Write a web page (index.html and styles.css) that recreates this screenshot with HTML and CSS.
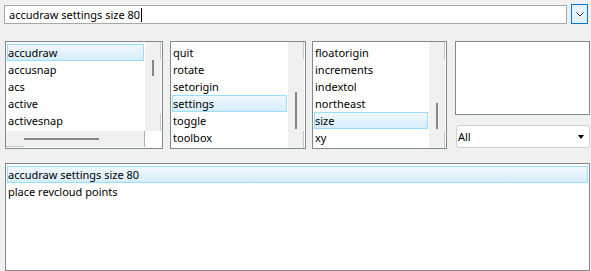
FILE: index.html
```html
<!DOCTYPE html>
<html>
<head>
<meta charset="utf-8">
<link rel="stylesheet" href="styles.css">
</head>
<body>
<div class="page">
  <div class="toprow">
    <div class="cmd"><span class="cmdtext">accudraw settings size 80</span><span class="caret"></span></div>
    <div class="dropbtn">
      <svg width="8" height="5" viewBox="0 0 8 5"><path d="M0.5 0.5 L4 4 L7.5 0.5" fill="none" stroke="#333" stroke-width="1"/></svg>
    </div>
  </div>

  <div class="midrow">
    <div class="list l1">
      <div class="items">
        <div class="item sel">accudraw</div>
        <div class="item">accusnap</div>
        <div class="item">acs</div>
        <div class="item">active</div>
        <div class="item">activesnap</div>
      </div>
      <div class="vscroll">
        <div class="sb-btn"></div>
        <div class="track"><div class="thumb" style="margin-top:1px;height:16px"></div></div>
        <div class="sb-btn"></div>
      </div>
      <div class="hscroll">
        <div class="hb-left"></div>
        <div class="htrack"><div class="hthumb" style="margin-left:0;width:75px"></div></div>
        <div class="hb-right"></div>
      </div>
      <div class="corner"></div>
    </div>

    <div class="list l2">
      <div class="items">
        <div class="item">quit</div>
        <div class="item">rotate</div>
        <div class="item">setorigin</div>
        <div class="item sel">settings</div>
        <div class="item">toggle</div>
        <div class="item">toolbox</div>
      </div>
      <div class="vscroll">
        <div class="sb-btn"></div>
        <div class="track"><div class="thumb" style="margin-top:33px;height:37px"></div></div>
        <div class="sb-btn"></div>
      </div>
    </div>

    <div class="list l3">
      <div class="items">
        <div class="item">floatorigin</div>
        <div class="item">increments</div>
        <div class="item">indextol</div>
        <div class="item">northeast</div>
        <div class="item sel">size</div>
        <div class="item">xy</div>
      </div>
      <div class="vscroll">
        <div class="sb-btn"></div>
        <div class="track"><div class="thumb" style="margin-top:44px;height:26px"></div></div>
        <div class="sb-btn"></div>
      </div>
    </div>

    <div class="side">
      <div class="preview"></div>
      <div class="combo"><span>All</span><span class="tri"></span></div>
    </div>
  </div>

  <div class="biglist">
    <div class="items">
      <div class="item sel">accudraw settings size 80</div>
      <div class="item">place revcloud points</div>
    </div>
  </div>
</div>
</body>
</html>
```

FILE: styles.css
```css
* { box-sizing: border-box; }
html, body { margin: 0; padding: 0; }
body {
  background: #f0f0f0;
  font-family: "Noto Sans", "Segoe UI", sans-serif;
  font-size: 11px;
  color: #000;
  width: 591px;
  height: 271px;
  overflow: hidden;
}
.page { padding: 4px 0 0 4px; }

.toprow { display: flex; align-items: flex-start; }
.cmd {
  margin-top: 1px;
  width: 563px;
  height: 19px;
  border: 1px solid #a8a8a8;
  background: #fff;
  display: flex;
  align-items: center;
  padding-left: 4px;
  line-height: 17px;
  white-space: nowrap;
}
.caret { width: 1px; height: 14px; background: #000; margin-left: 1px; }
.dropbtn {
  margin-left: 4px;
  width: 17px;
  height: 20px;
  border: 1px solid #0078d7;
  background: #e5f1fb;
  display: flex;
  align-items: center;
  justify-content: center;
}
.dropbtn svg { display: block; }

.midrow { display: flex; margin-top: 17px; margin-left: 1px; height: 108px; }
.list {
  background: #fff;
  border: 1px solid #828790;
  height: 108px;
  display: grid;
  grid-template-columns: 1fr 17px;
  grid-template-rows: 1fr;
}
.l1 { width: 158px; grid-template-rows: 1fr 17px; }
.l2 { width: 136px; margin-left: 7px; }
.l3 { width: 135px; margin-left: 6px; }

.items { padding: 2px 1px 0 1px; overflow: hidden; min-width: 0; min-height: 0; }
.item {
  height: 17px;
  line-height: 15px;
  border: 1px solid transparent;
  white-space: nowrap;
}
.item.sel {
  border-color: #99defd;
  background: linear-gradient(#f1f8fe, #d6edfc);
}

.vscroll {
  display: flex;
  flex-direction: column;
  background: #f0f0f0;
  margin-right: 1px;
  min-height: 0;
}
.sb-btn { height: 17px; flex: none; border-right: 1px solid #c9c9c9; }
.track { flex: 1; display: flex; flex-direction: column; align-items: center; min-height: 0; }
.thumb { width: 2px; background: #868686; flex: none; }

.hscroll {
  display: flex;
  background: #f0f0f0;
  height: 16px;
}
.hb-left { width: 18px; border-bottom: 1px solid #c9c9c9; }
.htrack { flex: 1; display: flex; align-items: center; }
.hthumb { height: 2px; background: #868686; }
.hb-right { width: 17px; border-right: 1px solid #b0b0b0; }
.corner { background: #fff; }

.side { width: 135px; margin-left: 8px; display: flex; flex-direction: column; }
.preview { height: 74px; background: #fff; border: 1px solid #828790; }
.combo {
  margin-top: 10px;
  margin-left: 1px;
  height: 23px;
  width: 134px;
  border: 1px solid #d0d0d0;
  border-radius: 3px;
  background: #fff;
  display: flex;
  align-items: center;
  justify-content: space-between;
  padding: 0 5px 0 1px;
}
.tri {
  width: 0; height: 0;
  border-left: 3.5px solid transparent;
  border-right: 3.5px solid transparent;
  border-top: 4px solid #000;
}

.biglist {
  margin-top: 14px;
  margin-left: 1px;
  width: 585px;
  height: 108px;
  background: #fff;
  border: 1px solid #828790;
}
```
